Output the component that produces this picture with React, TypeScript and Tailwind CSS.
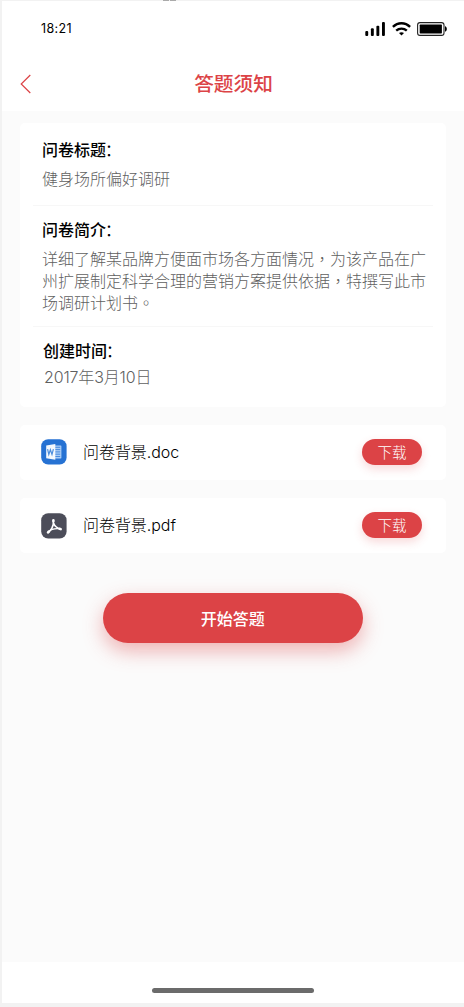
import type { ReactNode } from "react";

const files = [
  { name: "问卷背景", type: "doc" },
  { name: "问卷背景", type: "pdf" },
];

function StatusBar() {
  return (
    <div className="flex h-14 items-center justify-between pr-[17px] pl-[39px]">
      <span className="font-['Inter',sans-serif] text-[12.5px] font-normal tracking-[0.35px] text-black">18:21</span>
      <div className="flex items-center">
        <svg width="21" height="14" viewBox="0 0 21 14" className="mr-[6px]">
          <rect x="0.3" y="9" width="2.9" height="5" rx="1" />
          <rect x="5.9" y="6.3" width="2.9" height="7.7" rx="1" />
          <rect x="11.4" y="3.7" width="2.9" height="10.3" rx="1" />
          <rect x="17" y="0" width="2.9" height="14" rx="1" />
        </svg>
        <svg width="19" height="14" viewBox="0 0 19 14" fill="none" stroke="black" strokeWidth="2.3" className="mr-[6px]">
          <path d="M0.9 4.9C5.8 0 13.2 0 18.1 4.9" />
          <path d="M4.2 8.7C7.2 5.8 11.8 5.8 14.8 8.7" />
          <path d="M9.5 13.6L7 11.1C8.4 9.9 10.6 9.9 12 11.1Z" fill="black" stroke="none" />
        </svg>
        <svg width="30" height="14" viewBox="0 0 30 14">
          <rect x="0.6" y="0.6" width="26.4" height="12.8" rx="2.4" fill="none" stroke="#222" strokeWidth="1.1" />
          <rect x="2.7" y="2.6" width="22.2" height="8.8" rx="0.6" />
          <path d="M28 4.3C30.4 4.8 30.4 9.2 28 9.7Z" />
        </svg>
      </div>
    </div>
  );
}

function Label({ children }: { children: ReactNode }) {
  return (
    <h2 className="text-base leading-6 font-medium text-black">
      {children}
      <span className="-ml-px font-normal">：</span>
    </h2>
  );
}

function WordIcon() {
  return (
    <svg width="26" height="26" viewBox="0 0 26 26">
      <rect x="0.2" y="0.2" width="25.4" height="25.4" rx="7" fill="#2672d3" />
      <rect x="13" y="6.4" width="7.4" height="13" rx="0.6" fill="#a9ccf5" />
      <path d="M14 8.3h5.2M14 10.6h5.2M14 12.9h5.2M14 15.2h5.2M14 17.5h5.2" stroke="#3f83db" strokeWidth="0.9" />
      <path d="M5.2 6.6L14.3 5.1V20.7L5.2 19.2Z" fill="#f4f8fd" />
      <path d="M6.6 10.2L7.8 15.5L9.4 10.7L11 15.5L12.4 10.2" fill="none" stroke="#4b8ddd" strokeWidth="1.2" />
    </svg>
  );
}

function PdfIcon() {
  return (
    <svg width="26" height="26" viewBox="0 0 26 26" fill="none" className="mt-0.5">
      <rect x="0.2" y="0.2" width="25.4" height="25.4" rx="7" fill="#4c4d59" />
      <g stroke="white" strokeLinecap="round" strokeLinejoin="round">
        <path d="M12.4 7.3C12.8 10.5 12.5 12.2 10.9 15.1C9.8 17.1 8.2 18.8 7.1 19.6" strokeWidth="1.6" />
        <path d="M12.6 10.2C13.6 13 15.6 14.8 19.5 16.1" strokeWidth="1.6" />
        <path d="M7.6 18.6C10 16.2 14 15.1 19.4 15.8" strokeWidth="1.3" />
        <path d="M12.4 7.2V8.2M7 19.4L7.9 18.5M18.6 15.8L19.7 16.1" strokeWidth="2.5" />
      </g>
    </svg>
  );
}

function FileRow({ name, type }: { name: string; type: string }) {
  return (
    <div className="flex h-[55px] items-center rounded-[5px] bg-white pr-6 pb-px pl-[21px]">
      {type === "doc" ? <WordIcon /> : <PdfIcon />}
      <span className="ml-4 flex-1 font-['Inter','Noto_Sans_CJK_SC',sans-serif] text-base leading-6 font-light tracking-[-0.05px] text-black">
        {name}.{type}
      </span>
      <button className="h-[26px] w-[60px] rounded-full bg-[#dc4346] pb-px text-[14.5px] leading-[25px] font-light text-white shadow-[0_4px_10px_rgba(220,67,70,0.2)]">
        下载
      </button>
    </div>
  );
}

export default function App() {
  return (
    <div className="h-[1007px] w-[464px] overflow-hidden bg-[#f2f2f2] pt-px pl-0.5 font-['Noto_Sans_CJK_SC',sans-serif]">
      <div className="absolute top-0 left-[163px] flex gap-px">
        <span className="h-px w-1.5 bg-[#aaa]" />
        <span className="h-px w-1.5 bg-[#aaa]" />
      </div>
      <div className="flex h-[1002px] flex-col bg-[#fbfbfb]">
        <header className="h-[110px] shrink-0 bg-white">
          <StatusBar />
          <div className="grid h-[54px] grid-cols-[60px_1fr_60px] items-center">
            <button className="pl-[18px]" aria-label="返回">
              <svg width="12" height="20" viewBox="0 0 12 20" fill="none" stroke="#dc4346" strokeWidth="1.2">
                <path d="M10.3 1L1.2 10L10.3 19" />
              </svg>
            </button>
            <h1 className="pb-0.5 pl-px text-center text-[19.7px] font-medium text-[#dc4346]">答题须知</h1>
          </div>
        </header>

        <main className="flex-1 pt-3 pr-[18px] pl-[18px]">
          <section className="h-[284px] rounded-[5px] bg-white px-[13px]">
            <div className="h-[83px] border-b border-[#f7f7f7] pt-3.5 pl-[9px]">
              <Label>问卷标题</Label>
              <p className="mt-[5px] text-base leading-6 font-light text-[#5f5f5f]">健身场所偏好调研</p>
            </div>
            <div className="h-[121px] border-b border-[#f7f7f7] pt-[11px] pl-[9px]">
              <Label>问卷简介</Label>
              <p className="mt-[6px] w-[386px] font-['Noto_Sans_CJK_TC','Noto_Sans_CJK_SC',sans-serif] text-base leading-[22px] font-light text-[#5f5f5f]">
                详细了解某品牌方便面市场各方面情况，为该产品在广州扩展制定科学合理的营销方案提供依据，特撰写此市场调研计划书。
              </p>
            </div>
            <div className="pt-[11px] pl-[10px]">
              <Label>创建时间</Label>
              <p className="mt-[3px] pl-px font-['Inter','Noto_Sans_CJK_SC',sans-serif] text-base leading-6 font-light tracking-[-0.15px] text-[#5f5f5f]">
                2017年3月10日
              </p>
            </div>
          </section>

          <div className="mt-[18px] flex flex-col gap-[18px]">
            {files.map((file) => (
              <FileRow key={file.type} name={file.name} type={file.type} />
            ))}
          </div>

          <button className="mt-10 ml-[83px] block h-[49.5px] w-[259.5px] rounded-full bg-[#dc4346] text-base font-medium text-white shadow-[0_8px_20px_rgba(220,67,70,0.4)]">
            开始答题
          </button>
        </main>

        <footer className="flex h-[41px] shrink-0 items-end justify-center bg-white pb-2.5">
          <div className="h-[5px] w-[162px] rounded-full bg-[#6b6b6b]" />
        </footer>
      </div>
    </div>
  );
}
